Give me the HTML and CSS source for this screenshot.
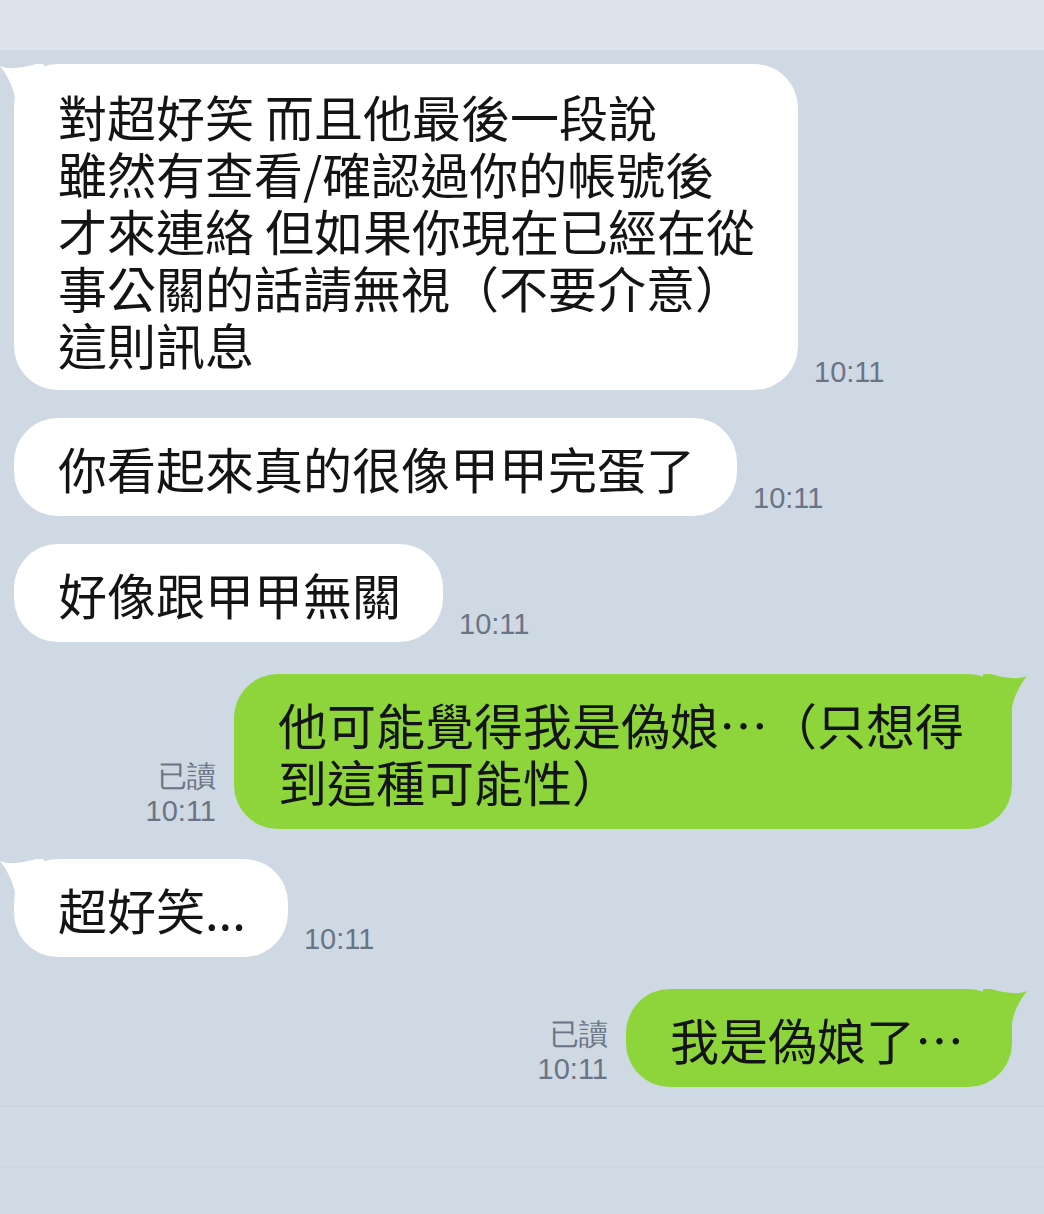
FILE: index.html
```html
<!DOCTYPE html>
<html lang="zh-Hant">
<head>
<meta charset="utf-8">
<title>Chat</title>
<link rel="stylesheet" href="styles.css">
</head>
<body>
<div class="screen">
  <div class="topbar"></div>
  <div class="chat">
    <div class="row in">
      <div class="bubble white wide">
        <svg class="tail tail-left" viewBox="0 0 44 44" width="44" height="44"><path d="M0 2 C 10 6, 22 4, 36 0 L 44 0 L 44 44 L 15 44 L 15 34 C 13 22, 7 11, 0 2 Z"/></svg>
        <span class="line">對超好笑 而且他最後一段說</span>
        <span class="line">雖然有查看/確認過你的帳號後</span>
        <span class="line">才來連絡 但如果你現在已經在從</span>
        <span class="line">事公關的話請無視（不要介意）</span>
        <span class="line">這則訊息</span>
      </div>
      <div class="meta">10:11</div>
    </div>

    <div class="row in">
      <div class="bubble white">你看起來真的很像甲甲完蛋了</div>
      <div class="meta">10:11</div>
    </div>

    <div class="row in">
      <div class="bubble white">好像跟甲甲無關</div>
      <div class="meta">10:11</div>
    </div>

    <div class="row out gap-lg">
      <div class="meta">已讀<br>10:11</div>
      <div class="bubble green">
        <svg class="tail tail-right" viewBox="0 0 44 44" width="44" height="44"><path d="M0 2 C 10 6, 22 4, 36 0 L 44 0 L 44 44 L 15 44 L 15 34 C 13 22, 7 11, 0 2 Z"/></svg>
        <span class="line">他可能覺得我是偽娘…（只想得</span>
        <span class="line">到這種可能性）</span>
      </div>
    </div>

    <div class="row in gap-md">
      <div class="bubble white">
        <svg class="tail tail-left" viewBox="0 0 44 44" width="44" height="44"><path d="M0 2 C 10 6, 22 4, 36 0 L 44 0 L 44 44 L 15 44 L 15 34 C 13 22, 7 11, 0 2 Z"/></svg>
        超好笑...
      </div>
      <div class="meta">10:11</div>
    </div>

    <div class="row out gap-lg">
      <div class="meta">已讀<br>10:11</div>
      <div class="bubble green short">
        <svg class="tail tail-right" viewBox="0 0 44 44" width="44" height="44"><path d="M0 2 C 10 6, 22 4, 36 0 L 44 0 L 44 44 L 15 44 L 15 34 C 13 22, 7 11, 0 2 Z"/></svg>
        我是偽娘了…
      </div>
    </div>
  </div>
  <div class="footer">
    <div class="band"></div>
  </div>
</div>
</body>
</html>
```

FILE: styles.css
```css
html, body {
  margin: 0;
  padding: 0;
}

body {
  background: #cfd9e4;
  width: 1044px;
  height: 1214px;
  overflow: hidden;
  font-family: "Noto Sans CJK TC", "Noto Sans CJK SC", sans-serif;
}

.screen {
  display: flex;
  flex-direction: column;
  height: 1214px;
}

.topbar {
  height: 52px;
  background: #dde3eb;
  border-bottom: 2px solid #d2dbe5;
  box-sizing: border-box;
  flex: none;
}

.chat {
  display: flex;
  flex-direction: column;
  padding: 12px 0 0 14px;
}

.row {
  display: flex;
  align-items: flex-end;
  margin-top: 28px;
}

.row:first-child {
  margin-top: 0;
}

.row.gap-lg {
  margin-top: 32px;
}

.row.gap-md {
  margin-top: 30px;
}

.row.out {
  justify-content: flex-end;
  padding-right: 32px;
}

.bubble {
  position: relative;
  font-size: 49px;
  line-height: 57px;
  color: #141414;
  padding: 21px 44px 20px 44px;
  border-radius: 44px;
  white-space: nowrap;
}

.line {
  display: block;
  height: 57px;
  line-height: 57px;
}

.bubble.white {
  background: #ffffff;
  padding-right: 42px;
}

.bubble.wide {
  width: 784px;
  box-sizing: border-box;
  padding-top: 23px;
  padding-bottom: 18px;
}

.bubble.green {
  background: #8dd53b;
  padding-right: 48px;
}

.tail {
  position: absolute;
  top: 0;
  display: block;
}

.tail-left {
  left: -14px;
  fill: #ffffff;
}

.tail-right {
  right: -15px;
  transform: scaleX(-1);
  fill: #8dd53b;
}

.meta {
  font-family: "Liberation Sans", Arial, sans-serif;
  font-size: 29px;
  line-height: 35px;
  color: #6a7485;
  white-space: nowrap;
}

.row.in .meta {
  margin-left: 16px;
}

.row.out .meta {
  margin-right: 18px;
  text-align: right;
}

.footer {
  flex: 1;
  margin-top: 18px;
  border-top: 2px solid #ccd6e1;
  background: #d2dbe5;
}

.band {
  margin-top: 59px;
  border-top: 2px solid #ced7e2;
}
```
